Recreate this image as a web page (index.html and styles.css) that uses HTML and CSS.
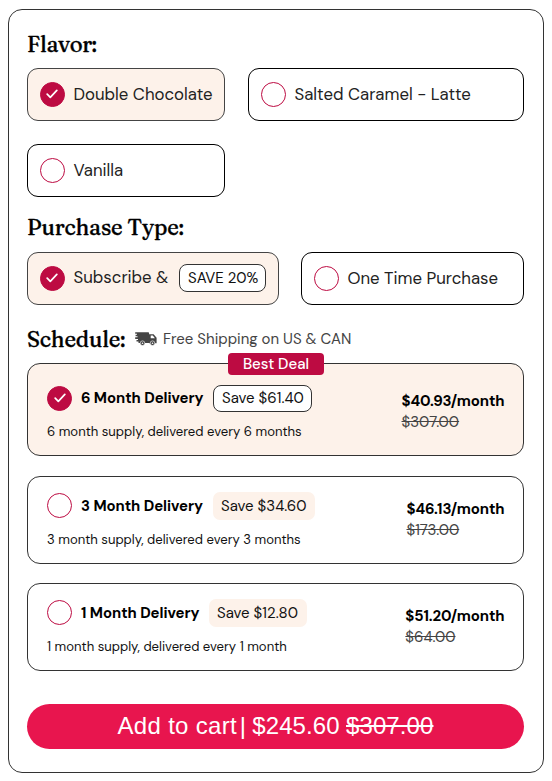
FILE: index.html
```html
<!DOCTYPE html>
<html lang="en">
<head>
<meta charset="utf-8">
<title>Purchase options</title>
<link rel="stylesheet" href="styles.css">
</head>
<body>
<main class="panel">
  <h2 class="heading heading-flavor">Flavor:</h2>
  <div class="flavors">
    <div class="option selected">
      <span class="radio"><svg class="check" viewBox="0 0 12 10"><path d="M1.2 5.2 4.3 8.3 10.8 1.4"/></svg></span>
      <span class="label">Double Chocolate</span>
    </div>
    <div class="option">
      <span class="radio"></span>
      <span class="label">Salted Caramel - Latte</span>
    </div>
    <div class="option">
      <span class="radio"></span>
      <span class="label">Vanilla</span>
    </div>
  </div>

  <h2 class="heading heading-type">Purchase Type:</h2>
  <div class="types">
    <div class="option selected">
      <span class="radio"><svg class="check" viewBox="0 0 12 10"><path d="M1.2 5.2 4.3 8.3 10.8 1.4"/></svg></span>
      <span class="label subscribe">Subscribe &amp;</span>
      <span class="pill outlined percent">SAVE 20%</span>
    </div>
    <div class="option">
      <span class="radio"></span>
      <span class="label">One Time Purchase</span>
    </div>
  </div>

  <div class="schedule-head">
    <h2 class="heading heading-schedule">Schedule:</h2>
    <svg class="truck" viewBox="0 0 22 14">
      <path class="body" d="M2.500 .3H13.200q.9 0 .9.9V11H3.500V9.600H1.500V8H3V6.900H.2V5.300H2.500V4.200H.6V2.800H2V1.700H.2V.3Z"/>
      <path class="body" fill-rule="evenodd" d="M14 2.200H18.600L21.600 5.700V11.300H14ZM15.700 3.500V6.200H19.900L17.800 3.500Z"/>
      <circle class="wheel" cx="7.500" cy="11.200" r="2.300"/>
      <circle class="wheel" cx="17.500" cy="11.200" r="2.300"/>
      <circle class="hub" cx="7.500" cy="11.200" r=".8"/>
      <circle class="hub" cx="17.500" cy="11.200" r=".8"/>
    </svg>
    <span class="shipping">Free Shipping on US &amp; CAN</span>
  </div>

  <div class="plans">
    <section class="plan best">
      <span class="badge">Best Deal</span>
      <div class="info">
        <div class="title-row">
          <span class="radio"><svg class="check" viewBox="0 0 12 10"><path d="M1.2 5.2 4.3 8.3 10.8 1.4"/></svg></span>
          <span class="title">6 Month Delivery</span>
          <span class="pill outlined save-6">Save $61.40</span>
        </div>
        <div class="desc">6 month supply, delivered every 6 months</div>
      </div>
      <div class="price"><b>$40.93/month</b><s>$307.00</s></div>
    </section>
    <section class="plan">
      <div class="info">
        <div class="title-row">
          <span class="radio"></span>
          <span class="title">3 Month Delivery</span>
          <span class="pill save-3">Save $34.60</span>
        </div>
        <div class="desc">3 month supply, delivered every 3 months</div>
      </div>
      <div class="price"><b>$46.13/month</b><s>$173.00</s></div>
    </section>
    <section class="plan monthly">
      <div class="info">
        <div class="title-row">
          <span class="radio"></span>
          <span class="title">1 Month Delivery</span>
          <span class="pill save-1">Save $12.80</span>
        </div>
        <div class="desc">1 month supply, delivered every 1 month</div>
      </div>
      <div class="price"><b>$51.20/month</b><s>$64.00</s></div>
    </section>
  </div>

  <button class="cart" type="button"><span class="cart-label">Add to cart</span><span class="bar">|</span><span class="now">$245.60</span><s>$307.00</s></button>
</main>
</body>
</html>
```
FILE: styles.css
```css
* { box-sizing: border-box; }

body {
  margin: 0;
  padding: 9px 8px 8px;
  background: #fff;
  color: #111;
  font-family: "DM Sans", Inter, sans-serif;
}

.panel {
  height: 764px;
  padding: 19px 19px 0 18px;
  border: 1px solid #333;
  border-radius: 14px;
  display: flex;
  flex-direction: column;
}

.heading {
  margin: 0;
  font: 500 22px/30px Fraunces, "Liberation Serif", serif;
  letter-spacing: -.18px;
  -webkit-text-stroke: .35px #000;
  color: #000;
  white-space: nowrap;
}
.heading-flavor { margin-bottom: 9px; }
.heading-type { margin: 15px 0 10px; }
.heading-schedule { width: 108px; }

.flavors {
  display: grid;
  grid-template-columns: 198px 276px;
  gap: 23px;
}
.types {
  display: grid;
  grid-template-columns: 252px 223px;
  gap: 22px;
}

.option {
  height: 53px;
  padding: 0 0 1px 12px;
  display: flex;
  align-items: center;
  border: 1px solid #000;
  border-radius: 11px;
  white-space: nowrap;
}
.option.selected { background: #fdf2ea; border-color: #444; }

.radio {
  flex: none;
  width: 25px;
  height: 25px;
  border: 1px solid #bd0b42;
  border-radius: 50%;
  display: flex;
  align-items: center;
  justify-content: center;
}
.selected .radio, .best .radio { background: #bd0b42; }
.option .radio { margin-right: 9px; margin-left: -.5px; }
.check { width: 12px; height: 10px; }
.check path { fill: none; stroke: #fff; stroke-width: 1.7; stroke-linecap: round; stroke-linejoin: round; }

.label { font-size: 16.800px; line-height: 24px; color: #222; }
.subscribe { width: 105.500px; }
.types .selected .label { padding-bottom: 1px; line-height: 23px; }

.pill {
  height: 28px;
  padding: 0 8px;
  border-radius: 7px;
  background: #fdf2ea;
  font-size: 15px;
  line-height: 28px;
  color: #111;
  white-space: nowrap;
}
.pill.outlined { background: #fff; border: 1px solid #333; border-radius: 8px; line-height: 26px; }
.percent { width: 87px; }
.save-6.outlined { line-height: 24px; }

.schedule-head { display: flex; align-items: center; height: 30px; margin-top: 19px; white-space: nowrap; }
.truck { width: 22px; height: 14px; }
.body { fill: #444; }
.wheel { fill: #444; stroke: #fff; stroke-width: .6; }
.hub { fill: #fff; }
.shipping { margin-left: 6px; font-size: 15px; color: #444; }

.plans { margin-top: 9px; }
.plan {
  position: relative;
  height: 88px;
  margin-bottom: 19px;
  padding: 14px 18.500px 0 19px;
  display: flex;
  justify-content: space-between;
  border: 1px solid #333;
  border-radius: 13px;
  white-space: nowrap;
}
.plan.best { height: 93px; margin-bottom: 20px; padding-top: 20px; background: #fdf2ea; }
.badge {
  position: absolute;
  top: -11px;
  left: 200px;
  width: 96px;
  height: 22px;
  border-radius: 4px;
  background: #bd0b42;
  color: #fff;
  text-align: center;
  font-weight: 500;
  font-size: 15px;
  line-height: 22px;
}
.title-row { display: flex; align-items: center; height: 29px; }
.best .title-row { height: 28px; }
.title { margin-left: 9px; width: 132px; font-weight: 700; font-size: 14.900px; letter-spacing: -.05px; color: #000; }
.monthly .title { width: 128px; }
.save-6 { height: 27px; width: 99px; }
.save-3 { width: 102px; }
.save-1 { width: 98px; }
.desc { margin-top: 11px; font-size: 13.100px; line-height: 18px; }

.price { padding-top: 8px; font-size: 15px; line-height: 21px; color: #000; }
.best .price { padding-top: 7px; }
.price b, .price s { display: block; width: max-content; }
.price b { letter-spacing: -.12px; }
.price s { color: #444; }

.cart {
  margin-top: 14px;
  height: 45px;
  padding: 0 0 1px 88px;
  display: flex;
  align-items: center;
  border: 0;
  border-radius: 23px;
  background: #e8154e;
  color: #fff;
  font: 24px/28px "Liberation Sans", Arial, sans-serif;
  white-space: nowrap;
}
.cart-label { width: 124.500px; letter-spacing: .3px; }
.bar { width: 6.500px; }
.now { width: 100px; letter-spacing: .1px; }
.cart s { letter-spacing: .1px; }
```
